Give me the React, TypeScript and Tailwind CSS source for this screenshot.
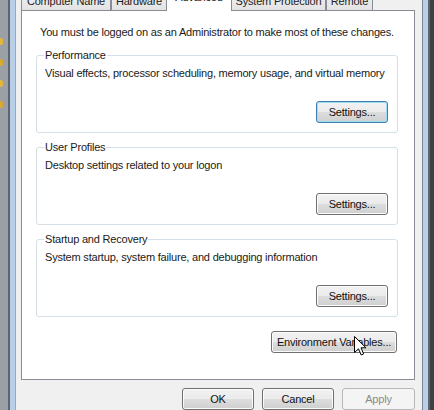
import type { ReactNode } from 'react';

const FONT = { fontFamily: '"Segoe UI", "Liberation Sans", Arial, sans-serif' };

function WinButton({
  children,
  width,
  focused,
  disabled,
}: {
  children: ReactNode;
  width: string;
  focused?: boolean;
  disabled?: boolean;
}) {
  if (disabled) {
    return (
      <button
        className={`${width} h-[22px] whitespace-nowrap rounded-[3px] border border-[#b5b9bc] bg-[#f4f4f4] text-[11px] tracking-[-0.2px] text-[#8a8a8a]`}
      >
        {children}
      </button>
    );
  }
  return (
    <button
      className={`${width} h-[22px] whitespace-nowrap rounded-[3px] border text-[11px] tracking-[-0.2px] text-[#111] bg-[linear-gradient(#f2f2f2_0%,#ebebeb_48%,#dddddd_52%,#cfcfcf_100%)] ${
        focused
          ? 'border-[#3c7fb1] shadow-[inset_0_0_0_1px_#9fdcf6]'
          : 'border-[#707070] shadow-[inset_0_0_0_1px_#fbfbfb]'
      }`}
    >
      {children}
    </button>
  );
}

function GroupBox({
  title,
  text,
  focused,
}: {
  title: string;
  text: string;
  focused?: boolean;
}) {
  return (
    <fieldset className="ml-[14px] mr-[16px] h-[85px] rounded-[3px] border border-[#d5dfe5] pl-[8px] pr-[9px]">
      <legend className="ml-[-1px] px-[1px] whitespace-nowrap text-[11px] leading-[14px] tracking-[-0.2px] text-[#1a1a1a]">
        {title}
      </legend>
      <p className="mt-[4px] whitespace-nowrap text-[11px] leading-[14px] tracking-[-0.2px] text-[#1a1a1a]">{text}</p>
      <div className="mt-[21px] flex justify-end">
        <WinButton width="w-[72px]" focused={focused}>
          Settings...
        </WinButton>
      </div>
    </fieldset>
  );
}

function Tab({ label, width, selected }: { label: string; width: string; selected?: boolean }) {
  if (selected) {
    return (
      <div
        className={`${width} relative z-10 -mx-[1px] mb-[-1px] h-[23px] whitespace-nowrap border border-b-0 border-[#898c95] bg-white rounded-t-[2px] text-center text-[11px] leading-[14px] tracking-[-0.2px] text-[#111] pt-[1px]`}
      >
        {label}
      </div>
    );
  }
  return (
    <div
      className={`${width} h-[20px] whitespace-nowrap border border-b-0 border-[#898c95] rounded-t-[2px] bg-[linear-gradient(#f2f2f2,#e3e3e3)] text-center text-[11px] leading-[14px] tracking-[-0.2px] text-[#222] pt-[3px]`}
    >
      {label}
    </div>
  );
}

function Cursor() {
  return (
    <svg
      className="absolute left-[354px] top-[336px] z-20"
      width="13"
      height="21"
      viewBox="0 0 13 21"
    >
      <path
        d="M0.5 0.5 L0.5 16.5 L4.5 12.8 L7.2 19 L9.6 18 L7 11.8 L12 11.8 Z"
        fill="#fff"
        stroke="#000"
        strokeWidth="1"
        strokeLinejoin="round"
      />
    </svg>
  );
}

export default function App() {
  return (
    <div className="relative flex h-[410px] w-[434px] overflow-hidden bg-[#eeeeee]" style={FONT}>
      {/* desktop strip on the left */}
      <div className="w-[8px] bg-[#9aa0a6] flex flex-col items-start pt-[38px] gap-[14px]">
        <div className="h-[7px] w-[3px] rounded-r-[2px] bg-[#e3b53a]" />
        <div className="h-[7px] w-[3px] rounded-r-[2px] bg-[#d9aa2e]" />
        <div className="h-[7px] w-[3px] rounded-r-[2px] bg-[#e3b53a]" />
        <div className="h-[7px] w-[3px] rounded-r-[2px] bg-[#d9aa2e]" />
      </div>
      <div className="w-[2px] bg-[#5f646b]" />
      <div className="w-[5px] bg-[#b7cfe9]" />
      <div className="w-[1px] bg-[#9ea8b3]" />

      {/* dialog body */}
      <div className="flex w-[406px] flex-col bg-[#f0f0f0] pl-[5px] pr-[7px]">
        <div className="-mt-[10px] flex h-[20px] items-end">
          <Tab label="Computer Name" width="w-[90px]" />
          <Tab label="Hardware" width="w-[56px]" />
          <Tab label="Advanced" width="w-[66px]" selected />
          <Tab label="System Protection" width="w-[95px]" />
          <Tab label="Remote" width="w-[47px]" />
        </div>

        <div className="flex h-[371px] flex-col border border-[#898c95] bg-white">
          <p className="pl-[18px] pt-[14px] whitespace-nowrap text-[11px] leading-[15px] tracking-[-0.2px] text-[#1a1a1a]">
            You must be logged on as an Administrator to make most of these changes.
          </p>
          <div className="mt-[8px] flex flex-col gap-[7px]">
            <GroupBox
              title="Performance"
              text="Visual effects, processor scheduling, memory usage, and virtual memory"
              focused
            />
            <GroupBox title="User Profiles" text="Desktop settings related to your logon" />
            <GroupBox
              title="Startup and Recovery"
              text="System startup, system failure, and debugging information"
            />
          </div>
          <div className="mt-[14px] mr-[17px] flex justify-end">
            <WinButton width="w-[126px]">Environment Variables...</WinButton>
          </div>
        </div>

        <div className="mt-[8px] flex justify-end gap-[8px]">
          <WinButton width="w-[72px]">OK</WinButton>
          <WinButton width="w-[72px]">Cancel</WinButton>
          <WinButton width="w-[73px]" disabled>
            Apply
          </WinButton>
        </div>
      </div>

      {/* right frame */}
      <div className="w-[1px] bg-[#7d848c]" />
      <div className="w-[5px] bg-[#b7cfe9]" />
      <div className="w-[2px] bg-[#5f646b]" />
      <div className="w-[4px] bg-[#3e4146]" />

      <Cursor />
    </div>
  );
}
